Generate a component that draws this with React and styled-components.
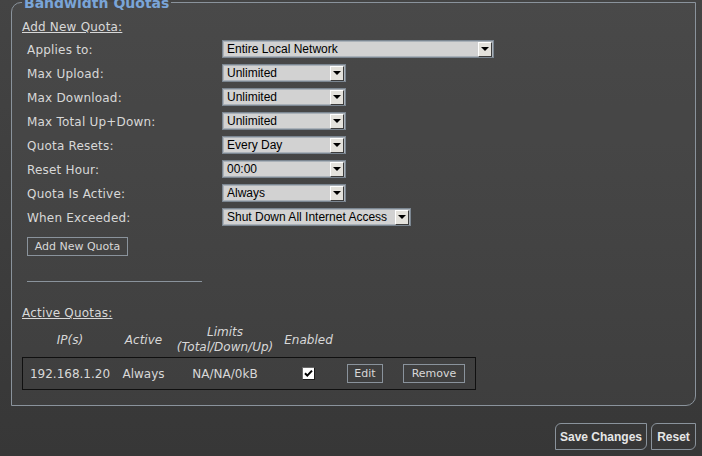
import styled, { createGlobalStyle } from 'styled-components'

const GlobalStyle = createGlobalStyle`
  html {
    height: 100%;
  }
  body {
    margin: 0;
    min-height: 100%;
    background: linear-gradient(180deg, #444444 0%, #373737 100%);
    font-family: 'DejaVu Sans', Verdana, sans-serif;
    font-size: 12px;
    color: #d8d8d8;
    overflow: hidden;
  }
`

const borderGrey = '#8a939c'

const Fieldset = styled.fieldset`
  margin: -7px 6px 0 11px;
  padding: 9px 10px 15px 10px;
  border: 1px solid ${borderGrey};
  border-radius: 10px 0 10px 0;
  background: rgba(255, 255, 255, 0.03);
  min-width: 0;
`
const Legend = styled.legend`
  padding: 2px 2px 0;
  font-size: 14px;
  line-height: 16px;
  font-weight: bold;
  color: #7aa5d8;
`
const SectionTitle = styled.div`
  line-height: 14px;
  text-decoration: underline;
  letter-spacing: 0.2px;
  margin-top: ${(p) => p.$gap || 0}px;
`
const FormGrid = styled.div`
  display: grid;
  grid-template-columns: 195px auto;
  grid-auto-rows: 24px;
  align-items: center;
  justify-items: start;
  margin-top: 3px;
  padding-left: 5px;
`
const Label = styled.span`
  letter-spacing: 0.2px;
  line-height: 14px;
  padding-top: 1px;
`
const SelectBox = styled.div`
  width: ${(p) => p.$width}px;
  height: 18px;
  box-sizing: border-box;
  display: flex;
  align-items: center;
  justify-content: space-between;
  padding: 0 1px 0 4px;
  border: 1px solid #7b8691;
  box-shadow: inset 0 0 0 1px #aab1b8;
  background: #d2d2d2;
  font-family: 'Liberation Sans', Arial, sans-serif;
  font-size: 12px;
  color: #000;
  white-space: nowrap;
`
const DropButton = styled.span`
  width: 14px;
  height: 15px;
  box-sizing: border-box;
  display: flex;
  align-items: center;
  justify-content: center;
  background: #e4e2dc;
  border: 1px solid;
  border-color: #ffffff #3c3c3c #3c3c3c #ffffff;
`
const Arrow = styled.span`
  width: 0;
  height: 0;
  border-left: 4px solid transparent;
  border-right: 4px solid transparent;
  border-top: 4px solid #000;
`
const PlainButton = styled.button`
  width: ${(p) => p.$width}px;
  height: 19px;
  box-sizing: border-box;
  padding: 0;
  background: transparent;
  border: 1px solid ${borderGrey};
  color: #d8d8d8;
  font-family: 'DejaVu Sans', Verdana, sans-serif;
  font-size: 11px;
  line-height: 17px;
  text-align: center;
`
const AddRow = styled.div`
  margin: 8px 0 0 5px;
  display: flex;
`
const Separator = styled.div`
  width: 175px;
  height: 1px;
  margin: 25px 0 0 5px;
  background: ${borderGrey};
`
const columns = '94px 53px 110px 57px 56px 82px'

const TableHead = styled.div`
  display: grid;
  grid-template-columns: ${columns};
  height: 30px;
  margin-top: 5px;
  padding-left: 1px;
  align-items: center;
  justify-items: center;
  text-align: center;
  font-style: italic;
  line-height: 15px;
`
const TableRow = styled.div`
  display: grid;
  grid-template-columns: ${columns};
  width: 452px;
  height: 31px;
  margin-top: 2px;
  border: 1px solid #101010;
  align-items: center;
  justify-items: center;
  line-height: 14px;
`
const CheckBox = styled.span`
  width: 13px;
  height: 13px;
  box-sizing: border-box;
  display: flex;
  align-items: center;
  justify-content: center;
  background: #fff;
  border: 1px solid;
  border-color: #6a6a6a #1a1a1a #1a1a1a #6a6a6a;
`
const ButtonBar = styled.div`
  display: flex;
  justify-content: flex-end;
  gap: 4px;
  margin: 17px 6px 0 0;
`
const MainButton = styled.button`
  width: ${(p) => p.$width}px;
  height: 27px;
  padding: 0;
  box-sizing: border-box;
  background: transparent;
  border: 1px solid ${borderGrey};
  border-radius: 6px 0 6px 0;
  color: #e6e6e6;
  font-family: 'Liberation Sans', Arial, sans-serif;
  font-size: 12px;
  font-weight: bold;
  text-align: center;
`

const rows = [
  ['Applies to:', 'Entire Local Network', 272],
  ['Max Upload:', 'Unlimited', 124],
  ['Max Download:', 'Unlimited', 124],
  ['Max Total Up+Down:', 'Unlimited', 124],
  ['Quota Resets:', 'Every Day', 124],
  ['Reset Hour:', '00:00', 124],
  ['Quota Is Active:', 'Always', 124],
  ['When Exceeded:', 'Shut Down All Internet Access', 189],
]

function Select({ value, width }) {
  return (
    <SelectBox $width={width}>
      <span>{value}</span>
      <DropButton>
        <Arrow />
      </DropButton>
    </SelectBox>
  )
}

function FormRow({ label, value, width }) {
  return (
    <>
      <Label>{label}</Label>
      <Select value={value} width={width} />
    </>
  )
}

export default function App() {
  return (
    <>
      <GlobalStyle />
      <Fieldset>
        <Legend>Bandwidth Quotas</Legend>
        <SectionTitle>Add New Quota:</SectionTitle>
        <FormGrid>
          {rows.map(([label, value, width]) => (
            <FormRow key={label} label={label} value={value} width={width} />
          ))}
        </FormGrid>
        <AddRow>
          <PlainButton $width={101}>Add New Quota</PlainButton>
        </AddRow>
        <Separator />
        <SectionTitle $gap={24}>Active Quotas:</SectionTitle>
        <TableHead>
          <span>IP(s)</span>
          <span>Active</span>
          <span>
            Limits
            <br />
            (Total/Down/Up)
          </span>
          <span>Enabled</span>
          <span />
          <span />
        </TableHead>
        <TableRow>
          <span>192.168.1.20</span>
          <span>Always</span>
          <span>NA/NA/0kB</span>
          <CheckBox>
            <svg width="9" height="9" viewBox="0 0 9 9">
              <path d="M1 4.2 L3.3 6.6 L8 1.6" stroke="#000" strokeWidth="2" fill="none" />
            </svg>
          </CheckBox>
          <PlainButton $width={36}>Edit</PlainButton>
          <PlainButton $width={62}>Remove</PlainButton>
        </TableRow>
      </Fieldset>
      <ButtonBar>
        <MainButton $width={92}>Save Changes</MainButton>
        <MainButton $width={45}>Reset</MainButton>
      </ButtonBar>
    </>
  )
}
